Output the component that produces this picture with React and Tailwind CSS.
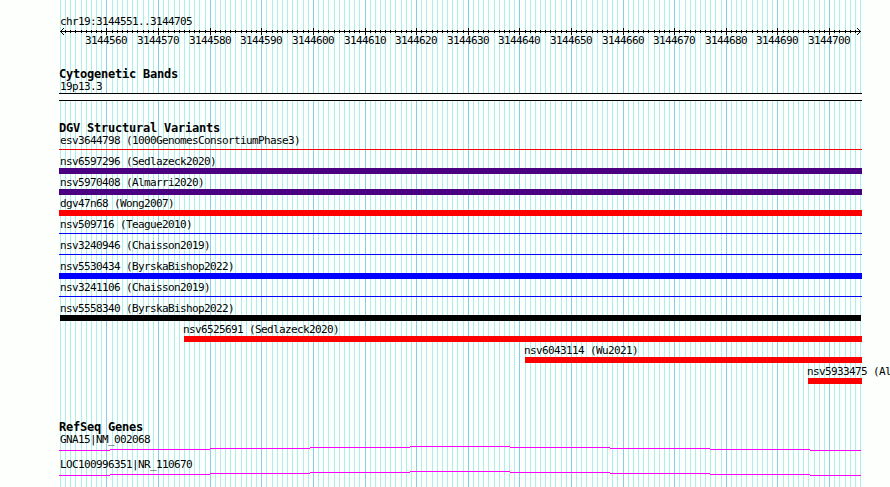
const START = 3144551;
const SPAN = 155;
const LEFT = 60;
const WIDTH = 800;

// one entry per base pair, a major line on every tenth
const ticks = Array.from({ length: SPAN + 1 }, (_, i) => ({
  x: LEFT + Math.round((i * WIDTH) / SPAN),
  pos: START + i,
  major: (START + i) % 10 === 0,
}));

const variants = [
  { label: "esv3644798 (1000GenomesConsortiumPhase3)", color: "bg-[#ff0000]", thin: true },
  { label: "nsv6597296 (Sedlazeck2020)", color: "bg-[#4b0082]" },
  { label: "nsv5970408 (Almarri2020)", color: "bg-[#4b0082]" },
  { label: "dgv47n68 (Wong2007)", color: "bg-[#ff0000]" },
  { label: "nsv509716 (Teague2010)", color: "bg-[#0000ff]", thin: true },
  { label: "nsv3240946 (Chaisson2019)", color: "bg-[#0000ff]", thin: true },
  { label: "nsv5530434 (ByrskaBishop2022)", color: "bg-[#0000ff]" },
  { label: "nsv3241106 (Chaisson2019)", color: "bg-[#0000ff]", thin: true },
  { label: "nsv5558340 (ByrskaBishop2022)", color: "bg-black", start: 60, end: 861, labelX: 60 },
  { label: "nsv6525691 (Sedlazeck2020)", color: "bg-[#ff0000]", start: 184, labelX: 183 },
  { label: "nsv6043114 (Wu2021)", color: "bg-[#ff0000]", start: 525, labelX: 524 },
  { label: "nsv5933475 (Al", color: "bg-[#ff0000]", start: 808, labelX: 807 },
];

const genes = ["GNA15|NM_002068", "LOC100996351|NR_110670"];

function Grid() {
  return (
    <svg className="absolute inset-0" width="890" height="487" shapeRendering="crispEdges">
      {ticks.map((t) => (
        <rect key={t.pos} x={t.x} y="0" width="1" height="487" fill={t.major ? "#87ceeb" : "#afeeee"} />
      ))}
    </svg>
  );
}

function Ruler() {
  return (
    <div className="relative h-[19px]">
      <svg className="block" width="890" height="7" shapeRendering="crispEdges">
        <rect x="60" y="3" width="801" height="1" />
        {ticks.slice(1, -1).map((t) =>
          t.major ? (
            <rect key={t.pos} x={t.x} y="0" width="1" height="7" />
          ) : (
            <rect key={t.pos} x={t.x} y="2" width="1" height="3" />
          )
        )}
        <path d="M61 2h1v1h-1zM62 1h1v1h-1zM63 0h1v1h-1zM61 4h1v1h-1zM62 5h1v1h-1zM63 6h1v1h-1z" />
        <path d="M859 2h1v1h-1zM858 1h1v1h-1zM857 0h1v1h-1zM859 4h1v1h-1zM858 5h1v1h-1zM857 6h1v1h-1z" />
      </svg>
      {ticks
        .filter((t) => t.major)
        .map((t) => (
          <span key={t.pos} className="absolute top-[6px]" style={{ left: t.x - 21 }}>
            {t.pos}
          </span>
        ))}
    </div>
  );
}

function Heading({ children }) {
  return <h2 className="h-3 pl-[59px] text-[12px] leading-[12px] font-bold tracking-[-0.224px]">{children}</h2>;
}

function Variant({ label, color, thin, start = 59, end = 862, labelX = 60 }) {
  return (
    <div className="h-[21px]">
      <div className="h-[13px]" style={{ paddingLeft: labelX }}>
        {label}
      </div>
      <div
        className={`${color} ${thin ? "mt-[2px] h-px" : "h-[6px]"}`}
        style={{ marginLeft: start, width: end - start }}
      />
    </div>
  );
}

function Gene({ label }) {
  return (
    <div className="h-[25px]">
      <div className="h-[13px] pl-[60px]">{label}</div>
      <svg className="block" width="890" height="5" shapeRendering="crispEdges" fill="#ff00ff">
        <rect x="59" y="4" width="51" height="1" />
        <rect x="110" y="3" width="100" height="1" />
        <rect x="210" y="2" width="100" height="1" />
        <rect x="310" y="1" width="100" height="1" />
        <rect x="410" y="0" width="100" height="1" />
        <rect x="510" y="1" width="100" height="1" />
        <rect x="610" y="2" width="100" height="1" />
        <rect x="710" y="3" width="100" height="1" />
        <rect x="810" y="4" width="51" height="1" />
      </svg>
    </div>
  );
}

export default function App() {
  return (
    <div className="relative h-[487px] w-[890px] overflow-hidden whitespace-nowrap bg-[#fdfffc] font-['DejaVu_Sans_Mono',monospace] text-[11px] leading-[13px] tracking-[-0.622px] text-black">
      <Grid />
      <main className="relative pt-[15px]">
        <div className="h-[13px] pl-[60px]">chr19:3144551..3144705</div>
        <Ruler />

        {/* Cytogenetic bands */}
        <section className="mt-[21px]">
          <Heading>Cytogenetic Bands</Heading>
          <div className="h-[13px] pl-[60px]">19p13.3</div>
          <div className="ml-[59px] h-2 w-[803px] border-y border-black bg-[#fdfffc]" />
        </section>

        {/* Structural variants */}
        <section className="mt-[21px]">
          <Heading>DGV Structural Variants</Heading>
          {variants.map((v) => (
            <Variant key={v.label} {...v} />
          ))}
        </section>

        {/* Genes */}
        <section className="mt-[35px]">
          <Heading>RefSeq Genes</Heading>
          {genes.map((g) => (
            <Gene key={g} label={g} />
          ))}
        </section>
      </main>
    </div>
  );
}
